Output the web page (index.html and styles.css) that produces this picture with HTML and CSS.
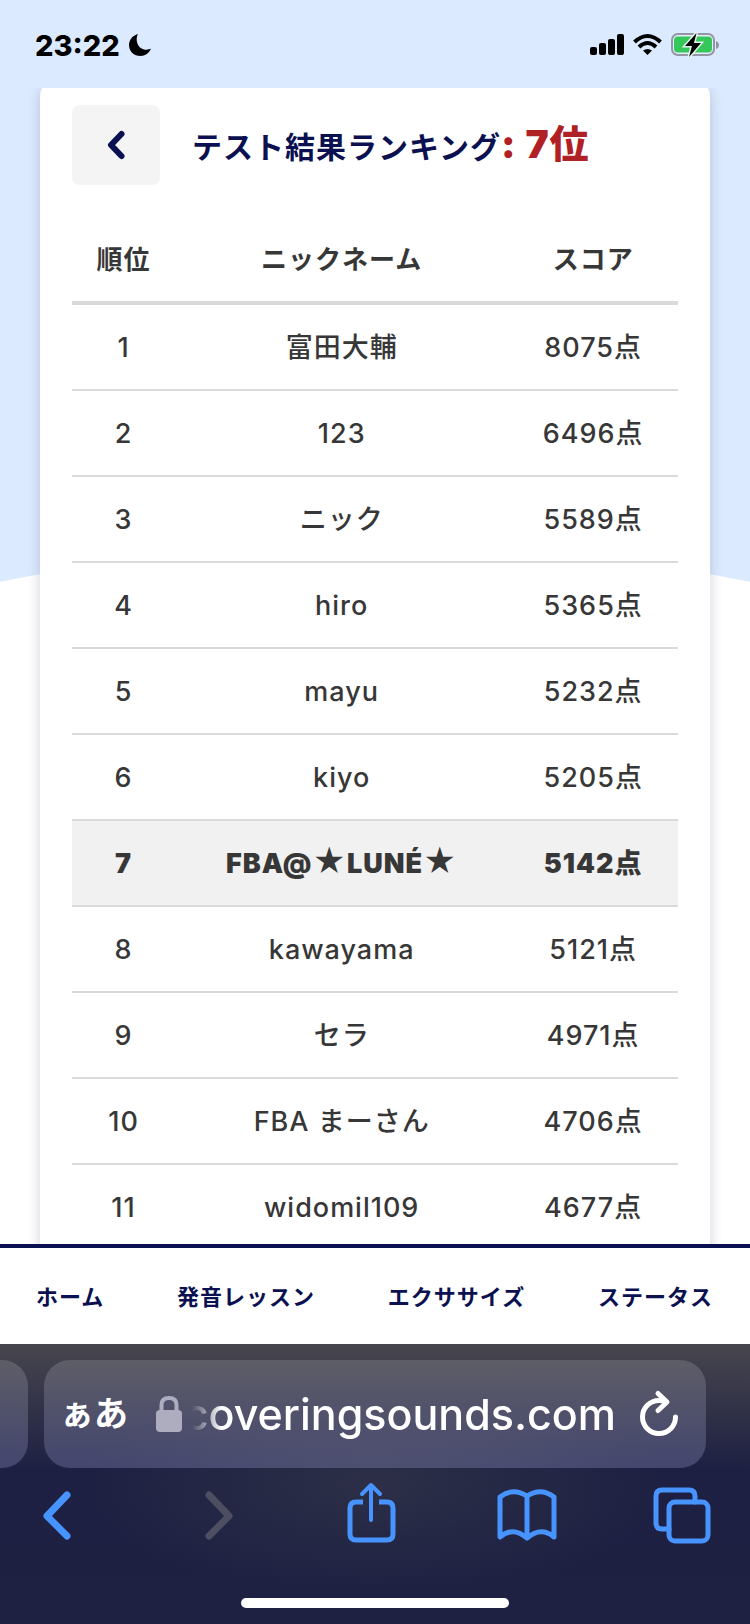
FILE: index.html
```html
<!DOCTYPE html>
<html lang="ja">
<head>
	<meta charset="utf-8">
	<meta name="viewport" content="width=device-width">
	<title>テスト結果ランキング</title>
	<link rel="stylesheet" href="styles.css">
</head>
<body>
	<div class="screen">
		<div class="status">
			<div class="clock">
				<span>23:22</span>
				<svg width="22" height="22" viewBox="0 0 22 22"><path d="M9 0C6 5 8 14 15 15.500C18 16 20.500 15.500 22 14.500C20.500 19 16 22 11.500 22C5 22 0 17.500 0 11C0 6 3.500 1.500 9 0Z"/></svg>
			</div>
			<div class="signals">
				<svg width="34" height="22" viewBox="0 0 34 22"><rect y="13" width="7" height="8" rx="2"/><rect x="9" y="9" width="7" height="12" rx="2"/><rect x="18" y="5" width="7" height="16" rx="2"/><rect x="27" width="7" height="21" rx="2"/></svg>
				<svg width="29" height="22" viewBox="0 0 29 22"><g fill="none" stroke="#000" stroke-width="4"><path d="M1.500 8Q14.500 -4 27.500 8"/><path d="M6 13Q14.500 5 23 13"/></g><path d="M10 16.500Q14.500 13.500 19 16.500L14.500 21Z"/></svg>
				<svg width="48" height="24" viewBox="0 0 48 24"><rect x="1" y="1" width="42" height="21" rx="6" fill="#e4eefd" stroke="#9297a3" stroke-width="2"/><path d="M45 8Q48 9 48 12Q48 15 45 16Z" fill="#9297a3"/><rect x="3" y="3.500" width="38" height="16" rx="4" fill="#34c759"/><path d="M25.500 0L14 13H21L18 24L30 10H23Z" stroke="#e4f4ee" stroke-width="3" paint-order="stroke"/></svg>
			</div>
		</div>

		<div class="content">
			<div class="card">
				<div class="cardTop">
					<button class="back" aria-label="戻る">
						<svg width="18" height="28" viewBox="0 0 18 28"><path d="M14.500 3L4 14L14.500 25"/></svg>
					</button>
					<h1>テスト結果ランキング<span class="rank">: 7位</span></h1>
				</div>
				<table class="ranking">
					<thead>
						<tr><th class="no">順位</th><th>ニックネーム</th><th class="score">スコア</th></tr>
					</thead>
					<tbody>
						<tr><td>1</td><td>富田大輔</td><td>8075点</td></tr>
						<tr><td>2</td><td>123</td><td>6496点</td></tr>
						<tr><td>3</td><td>ニック</td><td>5589点</td></tr>
						<tr><td>4</td><td>hiro</td><td>5365点</td></tr>
						<tr><td>5</td><td>mayu</td><td>5232点</td></tr>
						<tr><td>6</td><td>kiyo</td><td>5205点</td></tr>
						<tr class="me"><td>7</td><td>FBA@<span class="star">★</span>LUNÉ<span class="star">★</span></td><td>5142点</td></tr>
						<tr><td>8</td><td>kawayama</td><td>5121点</td></tr>
						<tr><td>9</td><td>セラ</td><td>4971点</td></tr>
						<tr><td>10</td><td>FBA まーさん</td><td>4706点</td></tr>
						<tr><td>11</td><td>widomil109</td><td>4677点</td></tr>
					</tbody>
				</table>
			</div>
		</div>

		<nav class="menu">
			<a href="#">ホーム</a>
			<a href="#">発音レッスン</a>
			<a href="#">エクササイズ</a>
			<a href="#">ステータス</a>
		</nav>

		<div class="browser">
			<div class="tabs">
				<div class="prevTab"></div>
				<div class="address">
					<button class="reader">ぁあ</button>
					<svg class="lock" width="26" height="36" viewBox="0 0 26 36"><path d="M5.500 17V9Q5.500 2 13 2Q20.500 2 20.500 9V17" fill="none" stroke="#adadbf" stroke-width="4"/><rect y="14" width="26" height="22" rx="4" fill="#adadbf"/></svg>
					<input class="url" type="text" value="coveringsounds.com" aria-label="アドレス">
					<button class="reload" aria-label="再読み込み">
						<svg width="38" height="46" viewBox="0 0 38 46"><path d="M26 11Q22.500 9.500 19 9.500A16.500 16.500 0 1 0 35.500 26M18 2.500L27 11L18 19.500"/></svg>
					</button>
				</div>
			</div>
			<div class="tools">
				<button aria-label="前のページ"><svg viewBox="0 0 60 64"><path stroke-width="7" d="M24 14L4 35L24 55"/></svg></button>
				<button aria-label="次のページ" disabled><svg viewBox="0 0 60 64"><path stroke-width="7" d="M14 14L34 35L14 55"/></svg></button>
				<button aria-label="共有"><svg viewBox="0 0 60 64"><path stroke-linecap="butt" d="M16 21H9Q3 21 3 27V53Q3 59 9 59H40Q46 59 46 53V27Q46 21 40 21H32"/><path stroke-width="4" d="M24 39V5M15 13L24 4L33 13"/></svg></button>
				<button aria-label="ブックマーク"><svg viewBox="0 0 60 64"><path d="M1 56V16Q14 6 28 15Q42 6 55 16V56Q42 45 28 57Q14 45 1 56ZM28 15V56"/></svg></button>
				<button aria-label="タブ一覧"><svg viewBox="0 0 60 64"><path d="M18 48H11Q5 48 5 42V15Q5 9 11 9H38Q44 9 44 15V21"/><rect x="18" y="21" width="39" height="39" rx="6"/></svg></button>
			</div>
			<div class="homeBar"></div>
		</div>
	</div>
</body>
</html>
```
FILE: styles.css
```css
*{
	margin: 0;
	padding: 0;
	box-sizing: border-box;
}
body{
	font-family: Inter, "Noto Sans CJK JP", sans-serif;
	color: #373737;
}
button, input{
	border: 0;
	background: none;
	font-family: inherit;
}
svg{
	display: block;
	flex-shrink: 0;
	overflow: visible;
}
.screen{
	display: flex;
	flex-direction: column;
	height: 100vh;
	overflow: hidden;
	/* 白い丘の形の背景 */
	background: radial-gradient(circle at 50% 2445px, #fff 1900px, #dceaff 1901px);
}

.status{
	display: flex;
	justify-content: space-between;
	align-items: center;
	flex-shrink: 0;
	height: 88px;
	padding: 2px 31px 0 35px;
	color: #000;
}
.clock, .signals{
	display: flex;
	align-items: center;
	gap: 9px;
}
.clock{
	font-size: 29px;
	font-weight: 800;
}

.content{
	flex: 1;
	min-height: 0;
	overflow: hidden;
	padding: 0 40px;
}
.card{
	margin-top: -8px;
	padding: 25px 32px;
	border-radius: 16px;
	background-color: #fff;
	box-shadow: 0 4px 14px rgba(0,0,50,0.18);
}
.cardTop{
	display: flex;
	align-items: center;
	gap: 32px;
	margin-bottom: 32px;
}
.back{
	display: flex;
	align-items: center;
	justify-content: center;
	width: 88px;
	height: 80px;
	border-radius: 8px;
	background-color: #f4f4f4;
}
.back path{
	fill: none;
	stroke: #0a1050;
	stroke-width: 6;
	stroke-linecap: round;
	stroke-linejoin: round;
}
h1{
	height: 80px;
	font-size: 30px;
	line-height: 78px;
	letter-spacing: 1px;
	white-space: nowrap;
	color: #0a1050;
}
.rank{
	font-size: 39px;
	font-weight: 900;
	color: #b02125;
}

.ranking{
	width: 100%;
	table-layout: fixed;
	border-collapse: separate;
	border-spacing: 0;
	font-size: 27px;
	line-height: 36px;
	letter-spacing: 1px;
	text-align: center;
}
.no{
	width: 17%;
}
.score{
	width: 28%;
}
th{
	padding: 25px 0 23px;
	border-bottom: 4px solid #dadada;
	font-size: 26px;
	white-space: nowrap;
}
td{
	height: 86px;
	padding-top: 2px;
	border-bottom: 2px solid #dadada;
	font-weight: 500;
	white-space: nowrap;
}
.me td{
	background-color: #f1f1f1;
	font-weight: 900;
}
.star{
	font-size: 32px;
	line-height: 1;
}

.menu{
	display: flex;
	justify-content: space-between;
	align-items: center;
	flex-shrink: 0;
	height: 100px;
	padding: 0 37px 3px 36px;
	border-top: 4px solid #0a1050;
	background-color: #fff;
}
.menu a{
	font-size: 22px;
	font-weight: 700;
	letter-spacing: 1px;
	text-decoration: none;
	color: #0a1050;
}

.browser{
	flex-shrink: 0;
	height: 280px;
	padding: 16px 0;
	background: radial-gradient(ellipse at 50% 50%, rgba(60,62,76,0.5), rgba(60,62,76,0) 55%), linear-gradient(#47464e, #1d2042 45%, #1e2142);
}
.tabs{
	display: flex;
	gap: 16px;
	padding-right: 44px;
}
.prevTab, .address{
	height: 108px;
	background: linear-gradient(rgba(255,255,255,0.15), rgba(170,170,230,0.27));
}
.prevTab{
	width: 28px;
	border-radius: 0 26px 26px 0;
}
.address{
	display: flex;
	flex: 1;
	align-items: center;
	min-width: 0;
	padding: 0 28px 0 16px;
	border-radius: 26px;
}
.reader{
	margin-right: 28px;
	font-size: 34px;
	font-weight: 600;
	line-height: 48px;
	white-space: nowrap;
	color: #fff;
}
.url{
	flex: 1;
	min-width: 0;
	height: 64px;
	margin-right: 24px;
	font-size: 43px;
	font-weight: 500;
	text-align: right;
	color: #fff;
	-webkit-mask-image: linear-gradient(90deg, transparent 10px, #000 40px);
	mask-image: linear-gradient(90deg, transparent 10px, #000 40px);
}
.reload path{
	fill: none;
	stroke: #fff;
	stroke-width: 5;
	stroke-linecap: round;
	stroke-linejoin: round;
}
.tools{
	display: flex;
	justify-content: space-between;
	padding: 13px 39px 0 43px;
}
.tools svg{
	width: 60px;
	height: 64px;
	fill: none;
	stroke: #4793ff;
	stroke-width: 5;
	stroke-linecap: round;
	stroke-linejoin: round;
}
.tools button:disabled svg{
	stroke: #4d4e62;
}
.homeBar{
	width: 268px;
	height: 10px;
	margin: 53px auto 0;
	border-radius: 5px;
	background-color: #fff;
}
```
